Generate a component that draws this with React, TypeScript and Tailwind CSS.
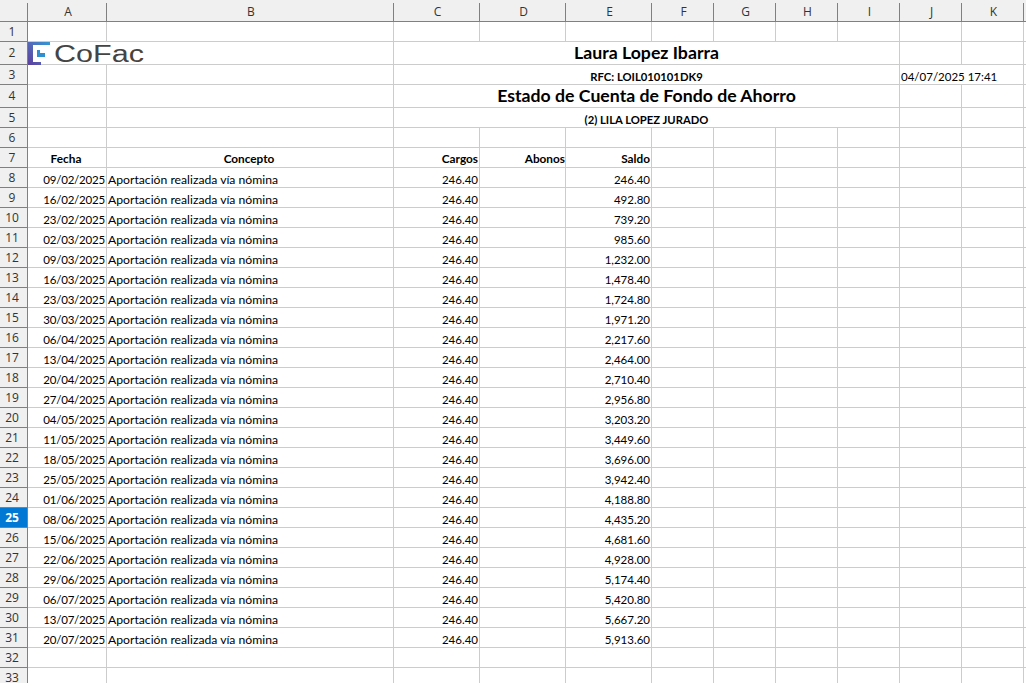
const columns = ["A", "B", "C", "D", "E", "F", "G", "H", "I", "J", "K"];
const dates = [
  "09/02/2025", "16/02/2025", "23/02/2025", "02/03/2025", "09/03/2025", "16/03/2025", "23/03/2025", "30/03/2025",
  "06/04/2025", "13/04/2025", "20/04/2025", "27/04/2025", "04/05/2025", "11/05/2025", "18/05/2025", "25/05/2025",
  "01/06/2025", "08/06/2025", "15/06/2025", "22/06/2025", "29/06/2025", "06/07/2025", "13/07/2025", "20/07/2025",
];
const saldos = [
  "246.40", "492.80", "739.20", "985.60", "1,232.00", "1,478.40", "1,724.80", "1,971.20",
  "2,217.60", "2,464.00", "2,710.40", "2,956.80", "3,203.20", "3,449.60", "3,696.00", "3,942.40",
  "4,188.80", "4,435.20", "4,681.60", "4,928.00", "5,174.40", "5,420.80", "5,667.20", "5,913.60",
];

const line = "border-r border-b border-[#cccccc]";
const textCell = `${line} overflow-hidden whitespace-nowrap flex items-end leading-[14px] text-black`;
const titleCell = `${line} overflow-hidden whitespace-nowrap flex items-center justify-center text-[17.7px] font-bold text-black`;
const subCell = `${textCell} col-span-7 justify-center text-[11.25px] font-bold`;
const headCell = `${line} overflow-hidden whitespace-nowrap flex items-end leading-[16px] text-black text-[11.8px] font-bold`;
const numCell = `${textCell} justify-end pr-px text-[11.5px]`;

function Blank({ count = 1 }: { count?: number }) {
  return (
    <>
      {Array.from({ length: count }).map((_, i) => (
        <div key={i} className={line} />
      ))}
      <div className="border-b border-[#cccccc]" />
    </>
  );
}

function RowHead({ n }: { n: number }) {
  const selected = n === 25;
  return (
    <div
      className={
        selected
          ? "flex items-center justify-center border-r border-b border-[#808080] bg-[#0078d4] pr-[3px] font-['Open_Sans',sans-serif] text-[12px] font-bold text-white"
          : "flex items-center justify-center border-r border-b border-[#808080] bg-[#f0f0f0] pr-[3px] font-['Open_Sans',sans-serif] text-[12px] text-[#333333]"
      }
    >
      {n}
    </div>
  );
}

function Logo() {
  return (
    <div className="absolute top-[42px] left-[28px] h-[22px] w-[117px] bg-white">
      <svg width="117" height="24" viewBox="0 0 117 24" className="overflow-visible">
        <defs>
          <linearGradient id="bracket" x1="0" y1="1" x2="1" y2="0">
            <stop offset="0" stopColor="#5b3f9e" />
            <stop offset="0.5" stopColor="#5468b8" />
            <stop offset="1" stopColor="#2f9bd6" />
          </linearGradient>
        </defs>
        <path d="M0 0H22V3H5V20H13V23H0Z" fill="url(#bracket)" />
        <path d="M9 8H12V11H17V15H9Z" fill="#2f8fd0" />
        <text
          x="26"
          y="20"
          textLength="90"
          lengthAdjust="spacingAndGlyphs"
          fontFamily="'Liberation Sans', sans-serif"
          fontSize="23.5"
          fill="#444444"
        >
          CoFac
        </text>
      </svg>
    </div>
  );
}

export default function App() {
  return (
    <div className="relative h-[683px] w-[1026px] overflow-hidden bg-white font-['Lato',sans-serif] text-[12.2px]">
      <div className="grid grid-cols-[28px_79px_287px_86px_86px_86px_62px_62px_62px_62px_62px_62px_2px] grid-rows-[22px_20px_23px_20px_23px_20px_repeat(28,20px)]">
        {/* column headings */}
        <div className="border-b border-[#808080] bg-[#f0f0f0] pt-[3px]">
          <div className="h-[18px] border-r border-[#808080]" />
        </div>
        {columns.map((c) => (
          <div key={c} className="border-b border-[#808080] bg-[#f0f0f0] pt-[3px]">
            <div className="flex h-[18px] items-center justify-center border-r border-[#808080] pl-[2px] font-['Open_Sans',sans-serif] text-[12px] text-[#333333]">
              {c}
            </div>
          </div>
        ))}
        <div className="border-b border-[#808080] bg-[#f0f0f0]" />

        {/* row 1 */}
        <RowHead n={1} />
        <Blank count={11} />

        {/* row 2 */}
        <RowHead n={2} />
        <div className={line} />
        <div className={line} />
        <div className={`${titleCell} col-span-7`}>Laura Lopez Ibarra</div>
        <Blank count={2} />

        {/* row 3 */}
        <RowHead n={3} />
        <div className={line} />
        <div className={line} />
        <div className={subCell}>RFC: LOIL010101DK9</div>
        <div className={`${textCell} col-span-2 pl-px text-[11.5px]`}>04/07/2025 17:41</div>
        <div className="border-b border-[#cccccc]" />

        {/* row 4 */}
        <RowHead n={4} />
        <div className={line} />
        <div className={line} />
        <div className={`${titleCell} col-span-7`}>Estado de Cuenta de Fondo de Ahorro</div>
        <Blank count={2} />

        {/* row 5 */}
        <RowHead n={5} />
        <div className={line} />
        <div className={line} />
        <div className={subCell}>(2) LILA LOPEZ JURADO</div>
        <Blank count={2} />

        {/* row 6 */}
        <RowHead n={6} />
        <Blank count={11} />

        {/* row 7 */}
        <RowHead n={7} />
        <div className={`${headCell} justify-center pr-[2px]`}>Fecha</div>
        <div className={`${headCell} justify-center pr-[2px]`}>Concepto</div>
        <div className={`${headCell} justify-end pr-px`}>Cargos</div>
        <div className={`${headCell} justify-end`}>Abonos</div>
        <div className={`${headCell} justify-end pr-px`}>Saldo</div>
        <Blank count={6} />

        {/* rows 8 to 31 */}
        {dates.map((date, i) => (
          <div key={date} className="contents">
            <RowHead n={i + 8} />
            <div className={`${numCell} tracking-[-0.2px]`}>{date}</div>
            <div className={`${textCell} pl-px`}>Aportación realizada vía nómina</div>
            <div className={numCell}>246.40</div>
            <div className={line} />
            <div className={numCell}>{saldos[i]}</div>
            <Blank count={6} />
          </div>
        ))}

        {/* rows 32 and 33 */}
        <RowHead n={32} />
        <Blank count={11} />
        <RowHead n={33} />
        <Blank count={11} />
      </div>
      <Logo />
    </div>
  );
}
